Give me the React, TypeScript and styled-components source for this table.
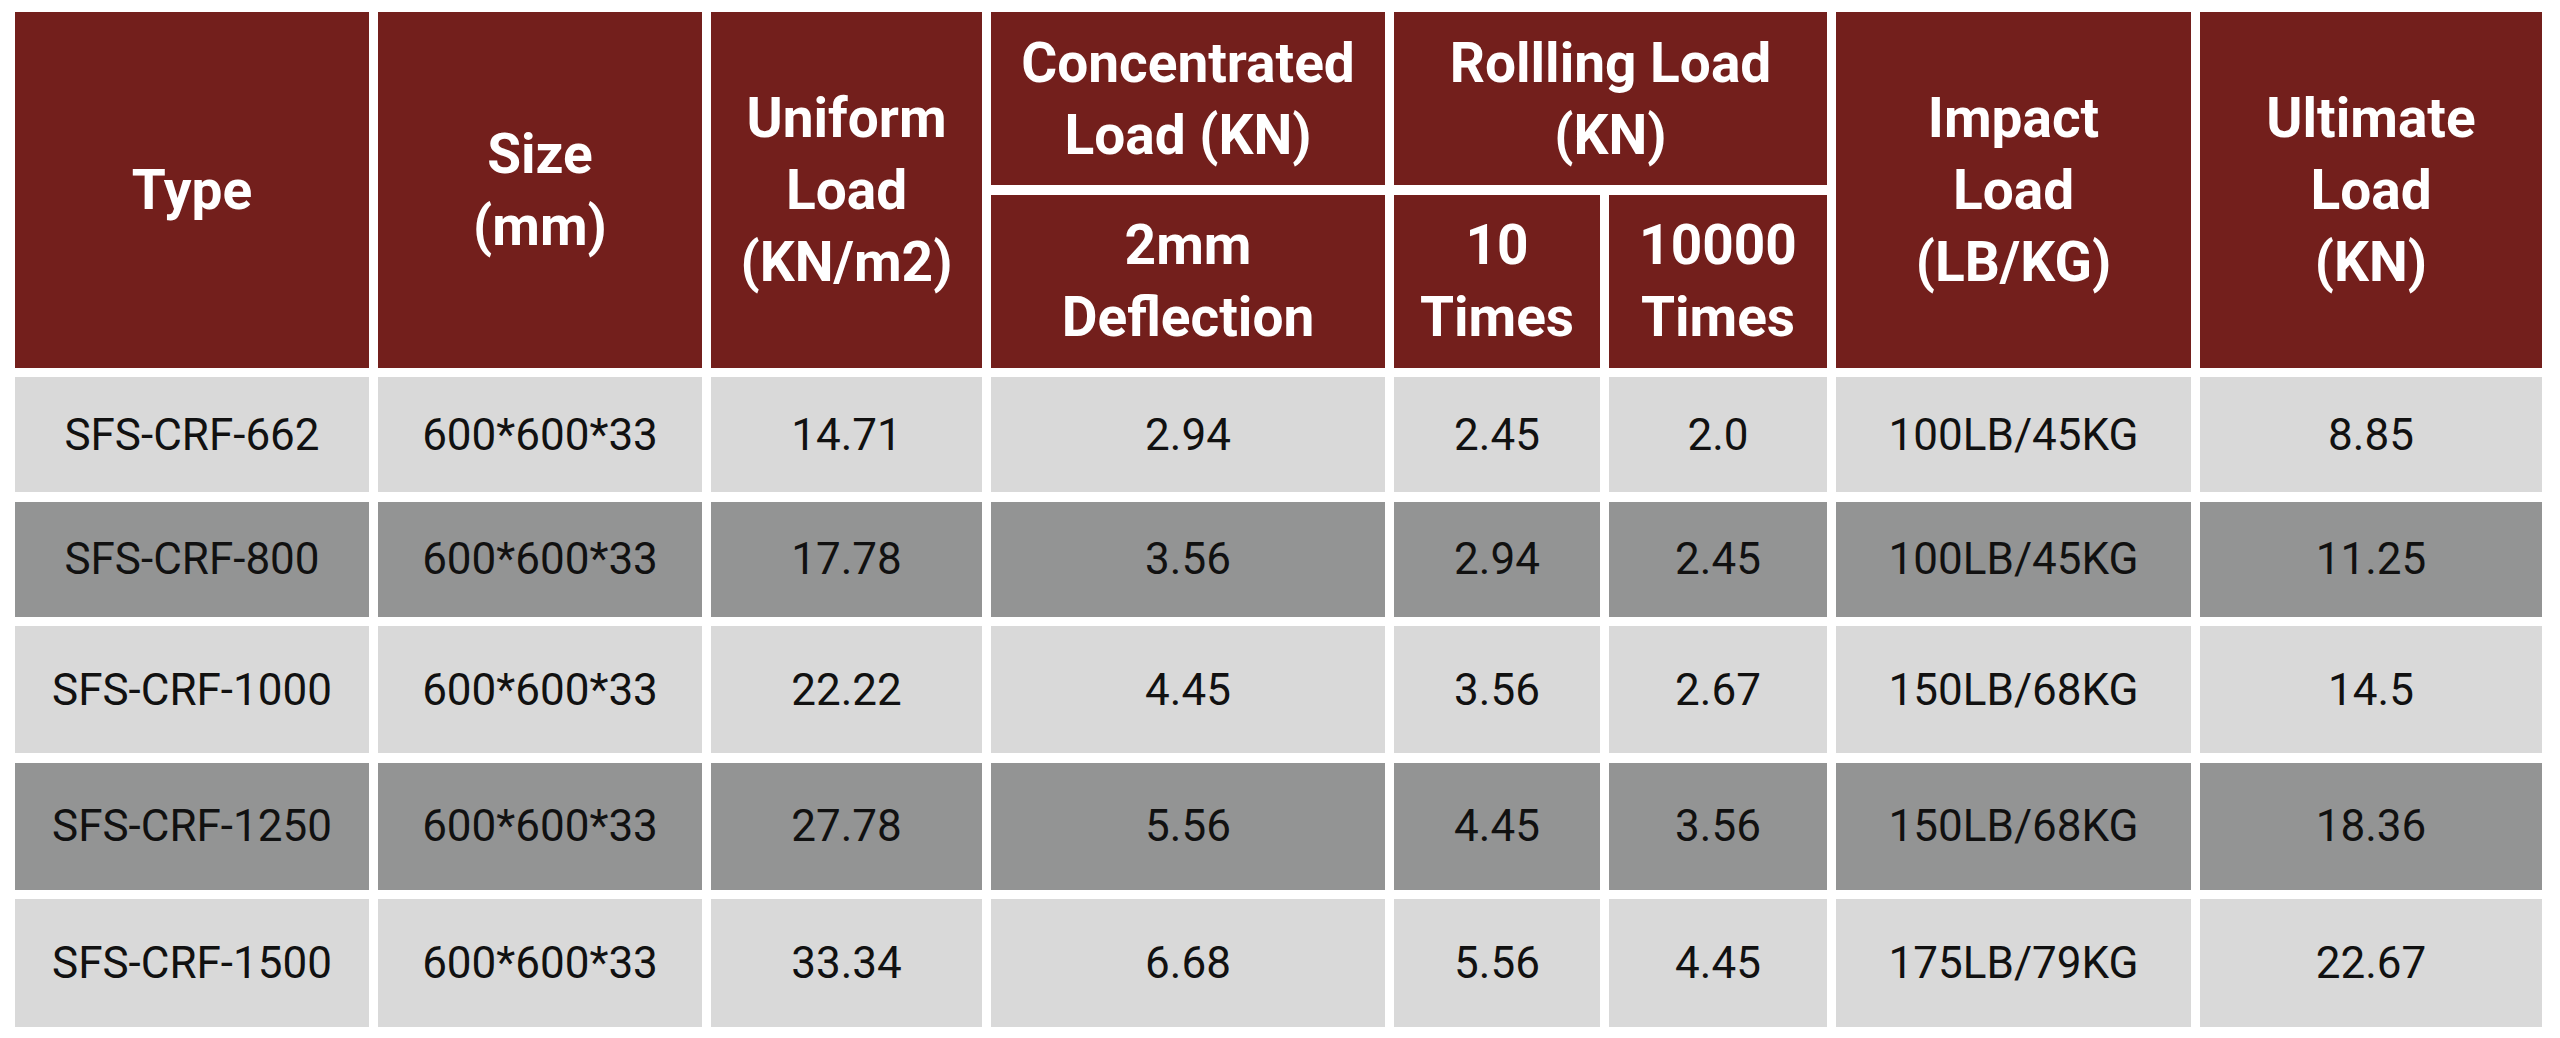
import React, { Fragment } from "react";
import styled, { createGlobalStyle } from "styled-components";

const GlobalStyle = createGlobalStyle`
    html, body {
        margin: 0;
        padding: 0;
        background: #FFFFFF;
    }
    body {
        font-family: Roboto, "Liberation Sans", sans-serif;
    }
`;

const Page = styled.div`
    padding: 12px 0 0 15px;
    box-sizing: border-box;
    width: 2560px;
    height: 1038px;
`;

const Table = styled.div`
    display: grid;
    grid-template-columns: 354px 324px 271px 394px 206px 218px 355px 342px;
    grid-template-rows: 173px 173px 115px 115px 127px 127px 128px;
    column-gap: 9px;
    row-gap: 9.5px;
`;

type HeadCellProps = {
    $col: string,
    $row: string,
}

const HeadCell = styled.div<HeadCellProps>`
    grid-column: ${p => p.$col};
    grid-row: ${p => p.$row};
    background: #731f1c;
    color: #FFFFFF;
    display: flex;
    align-items: center;
    justify-content: center;
    text-align: center;
    font-family: Roboto, "Liberation Sans", sans-serif;
    font-weight: 700;
    font-size: 55px;
    line-height: 72px;
`;

const BodyCell = styled.div<{ $dark: boolean }>`
    background: ${p => p.$dark ? "#939494" : "#d9d9d9"};
    color: #111111;
    display: flex;
    align-items: center;
    justify-content: center;
    font-family: Roboto, "Liberation Sans", sans-serif;
    font-weight: 400;
    font-size: 44px;
`;

type Header = {
    lines: string[],
    col: string,
    row: string,
}

const headers: Header[] = [
    { lines: ["Type"], col: "1", row: "1 / 3" },
    { lines: ["Size", "(mm)"], col: "2", row: "1 / 3" },
    { lines: ["Uniform", "Load", "(KN/m2)"], col: "3", row: "1 / 3" },
    { lines: ["Concentrated", "Load (KN)"], col: "4", row: "1" },
    { lines: ["Rollling Load", "(KN)"], col: "5 / 7", row: "1" },
    { lines: ["Impact", "Load", "(LB/KG)"], col: "7", row: "1 / 3" },
    { lines: ["Ultimate", "Load", "(KN)"], col: "8", row: "1 / 3" },
    { lines: ["2mm", "Deflection"], col: "4", row: "2" },
    { lines: ["10", "Times"], col: "5", row: "2" },
    { lines: ["10000", "Times"], col: "6", row: "2" },
];

const rows: string[][] = [
    ["SFS-CRF-662", "600*600*33", "14.71", "2.94", "2.45", "2.0", "100LB/45KG", "8.85"],
    ["SFS-CRF-800", "600*600*33", "17.78", "3.56", "2.94", "2.45", "100LB/45KG", "11.25"],
    ["SFS-CRF-1000", "600*600*33", "22.22", "4.45", "3.56", "2.67", "150LB/68KG", "14.5"],
    ["SFS-CRF-1250", "600*600*33", "27.78", "5.56", "4.45", "3.56", "150LB/68KG", "18.36"],
    ["SFS-CRF-1500", "600*600*33", "33.34", "6.68", "5.56", "4.45", "175LB/79KG", "22.67"],
];

export default function App() {
    return (
        <Fragment>
            <GlobalStyle />
            <Page>
                <Table>
                    {headers.map(h => (
                        <HeadCell key={h.lines.join(" ")} $col={h.col} $row={h.row}>
                            <div>
                                {h.lines.map((line, i) => (
                                    <Fragment key={i}>
                                        {i > 0 ? <br /> : null}
                                        {line}
                                    </Fragment>
                                ))}
                            </div>
                        </HeadCell>
                    ))}
                    {rows.map((row, r) =>
                        row.map((value, c) => (
                            <BodyCell key={`${r}-${c}`} $dark={r % 2 === 1}>
                                {value}
                            </BodyCell>
                        ))
                    )}
                </Table>
            </Page>
        </Fragment>
    );
}
